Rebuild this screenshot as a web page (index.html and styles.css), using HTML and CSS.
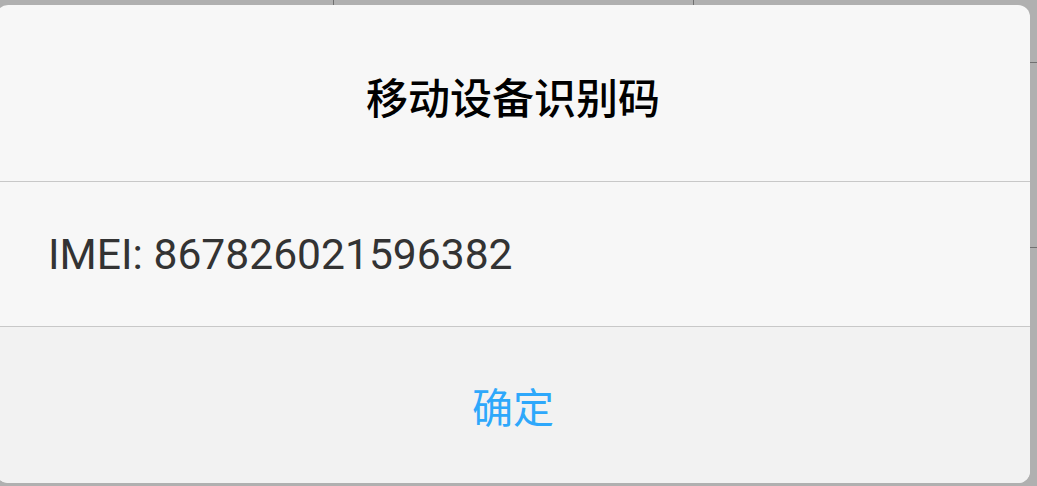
FILE: index.html
```html
<!DOCTYPE html>
<html lang="zh-CN">
<head>
<meta charset="utf-8">
<title>移动设备识别码</title>
<link rel="stylesheet" href="styles.css">
</head>
<body>
<div class="backdrop">
  <div class="cell c1 r1"></div>
  <div class="cell c2 r1"></div>
  <div class="cell c3 r1"></div>
  <div class="cell c1 r2"></div>
  <div class="cell c2 r2"></div>
  <div class="cell c3 r2"></div>
</div>
<div class="dialog">
  <div class="dialog-title">移动设备识别码</div>
  <div class="dialog-body">IMEI: 867826021596382</div>
  <div class="dialog-actions"><span class="btn">确定</span></div>
</div>
</body>
</html>
```
FILE: styles.css
```css
html, body {
  margin: 0;
  padding: 0;
}
body {
  width: 1037px;
  height: 486px;
  background: #b0b0b0;
  position: relative;
  overflow: hidden;
  font-family: "Noto Sans CJK SC", sans-serif;
}
.backdrop {
  display: grid;
  grid-template-columns: 334px 360px 1fr;
  grid-template-rows: 63px 185px;
}
.cell {
  box-sizing: border-box;
}
.c1, .c2 {
  border-right: 1px solid #707070;
}
.r1, .r2 {
  border-bottom: 1px solid #707070;
}
.dialog {
  position: absolute;
  left: -4px;
  top: 5px;
  width: 1034px;
  height: 478px;
  border-radius: 12px;
  overflow: hidden;
  display: flex;
  flex-direction: column;
  background: #f7f7f7;
}
.dialog-title {
  height: 177px;
  padding-top: 4px;
  display: flex;
  align-items: center;
  justify-content: center;
  font-size: 42px;
  font-weight: 500;
  color: #000;
  border-bottom: 1px solid #c8c8c8;
  box-sizing: border-box;
}
.dialog-body {
  height: 145px;
  display: flex;
  align-items: center;
  padding-left: 52px;
  font-family: Roboto, "Noto Sans", sans-serif;
  font-size: 42.6px;
  color: #333;
  border-bottom: 1px solid #c8c8c8;
  box-sizing: border-box;
}
.dialog-actions {
  flex: 1;
  background: #f2f2f2;
  display: flex;
  align-items: center;
  justify-content: center;
}
.btn {
  font-size: 41px;
  color: #2ea8fb;
}
```
